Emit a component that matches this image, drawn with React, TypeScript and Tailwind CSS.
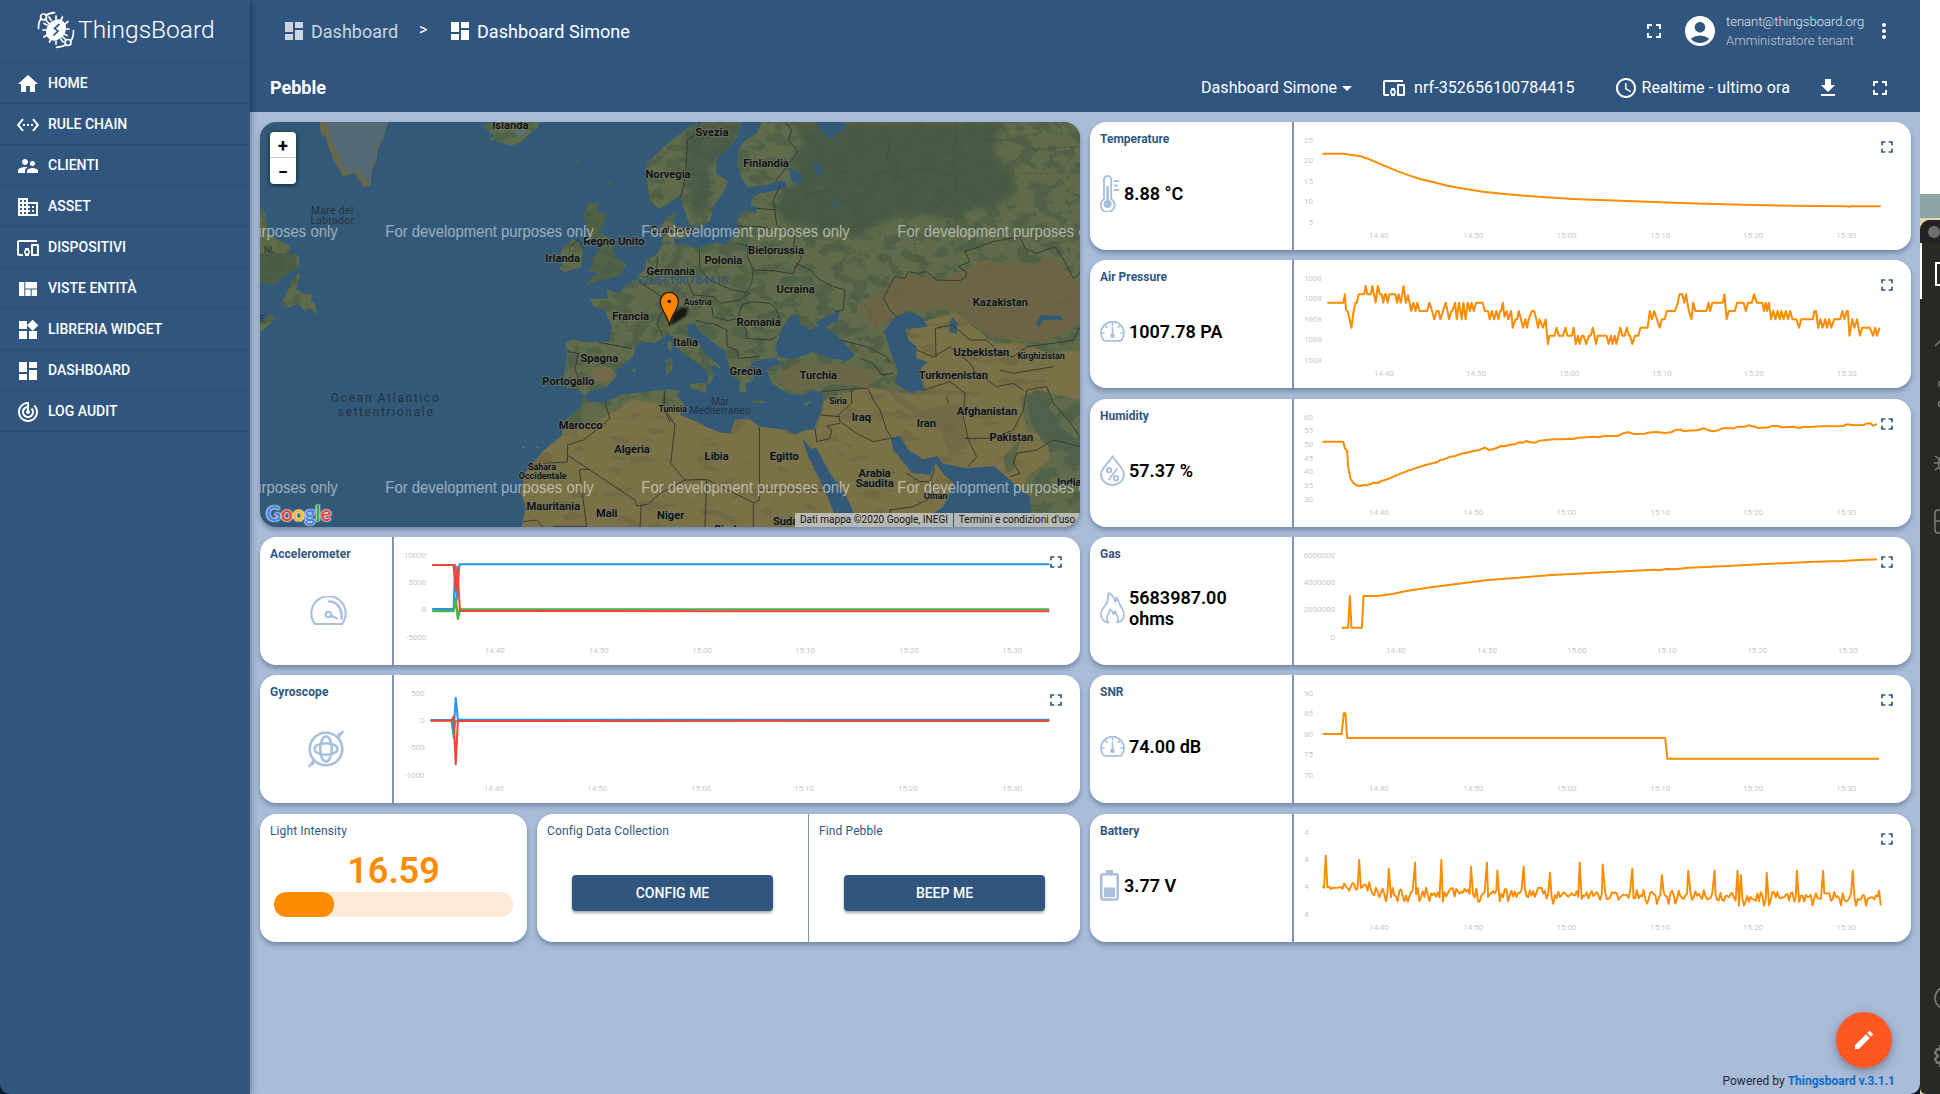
import React from "react";
import {
  MdHome, MdSettingsEthernet, MdSupervisorAccount, MdDomain, MdDevicesOther, MdViewQuilt, MdWidgets,
  MdDashboard, MdTrackChanges, MdFullscreen, MdAccountCircle, MdMoreVert, MdAccessTime, MdFileDownload,
  MdEdit, MdArrowDropDown,
} from "react-icons/md";

type Pt = [number, number];

const ORANGE = "#ff8b00";

/* ---------- chart ---------- */

interface Series { color: string; pts: Pt[]; width?: number }
interface ChartProps {
  side: "left" | "right";
  top: number;
  yLabels: [string, number][];
  yRight: number;
  xs: number[];
  series: Series[];
}

const TIMES = ["14:40", "14:50", "15:00", "15:10", "15:20", "15:30"];

function Chart({ side, top, yLabels, yRight, xs, series }: ChartProps) {
  const k = side === "right" ? 1.8233 : 1.8667;
  const x0 = side === "right" ? 390.2 : 268.8;
  const fx = (x: number) => +((x - x0) / k).toFixed(2);
  const fy = (y: number) => +((y - top) / 3).toFixed(2);
  return (
    <div className="relative h-full flex-1 bg-white">
      <svg className="block h-full w-full" fontFamily="Roboto, sans-serif" fontSize="8" fill="#c9c9c9">
        {yLabels.map(([t, y], i) => (
          <text key={i} x={fx(yRight)} y={fy(y) + 2.5} textAnchor="end">{t}</text>
        ))}
        {xs.map((x, i) => (
          <text key={i} x={fx(x)} y={115.500} textAnchor="middle">{TIMES[i]}</text>
        ))}
        {series.map((s, i) => (
          <polyline key={i} fill="none" stroke={s.color} strokeWidth={s.width ?? 2} strokeLinejoin="round"
            points={s.pts.map(([x, y]) => `${fx(x)},${fy(y)}`).join(" ")} />
        ))}
      </svg>
      <MdFullscreen className={side === "right" ? "absolute top-[15px] right-[14px] bg-white text-[#305680]" : "absolute top-[15px] right-[14px] text-[#305680]"} size={20} />
    </div>
  );
}

/* ---------- data ---------- */

const XS_A = [545, 717, 887, 1058, 1227, 1397];

const temperature: Pt[] = [[442, 131], [482, 131], [492, 134], [510, 138], [528, 148], [545, 160], [562, 172], [580, 184], [600, 196], [620, 207], [645, 217], [670, 227], [695, 235], [735, 245], [770, 251], [800, 256], [850, 262], [900, 267], [960, 271], [1058, 277], [1140, 281], [1227, 285], [1300, 287], [1398, 289], [1402, 290], [1406, 289], [1460, 289]];

const pressure: Pt[] = [[451, 578], [480, 578], [483, 553], [485, 600], [488, 603], [495, 653], [499, 603], [502, 578], [505, 578], [508, 553], [518, 553], [521, 528], [524, 553], [530, 553], [533, 528], [539, 578], [543, 528], [547, 553], [550, 553], [553, 578], [556, 553], [558, 553], [561, 578], [564, 553], [575, 553], [578, 578], [581, 553], [585, 578], [590, 528], [594, 578], [598, 556], [604, 603], [608, 578], [612, 603], [615, 578], [619, 603], [633, 603], [637, 578], [642, 603], [646, 628], [650, 603], [654, 603], [657, 628], [662, 603], [667, 578], [673, 628], [677, 603], [679, 603], [684, 578], [687, 628], [691, 578], [696, 628], [699, 578], [703, 628], [707, 578], [711, 603], [714, 578], [718, 603], [722, 578], [734, 578], [738, 603], [744, 603], [747, 628], [751, 603], [755, 628], [759, 603], [763, 628], [766, 603], [768, 603], [771, 578], [774, 620], [778, 603], [781, 628], [786, 603], [789, 653], [794, 628], [797, 628], [800, 603], [804, 628], [808, 653], [812, 628], [815, 653], [818, 628], [824, 603], [828, 603], [832, 628], [835, 653], [838, 628], [844, 653], [849, 628], [853, 702], [856, 677], [865, 677], [869, 653], [873, 677], [881, 677], [885, 653], [889, 677], [897, 677], [900, 653], [904, 702], [908, 677], [911, 702], [915, 677], [918, 677], [923, 702], [928, 677], [931, 677], [935, 653], [941, 702], [944, 677], [960, 677], [964, 702], [968, 677], [971, 702], [975, 677], [978, 702], [985, 653], [989, 677], [993, 677], [997, 653], [1001, 677], [1003, 677], [1007, 702], [1012, 677], [1018, 677], [1022, 653], [1035, 653], [1039, 603], [1043, 628], [1047, 603], [1052, 628], [1057, 653], [1061, 628], [1066, 628], [1070, 603], [1085, 603], [1090, 578], [1093, 553], [1098, 553], [1102, 578], [1105, 553], [1110, 603], [1115, 628], [1118, 578], [1122, 603], [1142, 603], [1146, 578], [1149, 603], [1153, 578], [1172, 578], [1175, 553], [1179, 628], [1183, 603], [1194, 603], [1198, 578], [1210, 578], [1214, 603], [1218, 578], [1225, 578], [1229, 553], [1234, 578], [1244, 578], [1247, 603], [1250, 578], [1253, 603], [1256, 578], [1260, 628], [1264, 603], [1268, 628], [1272, 603], [1276, 628], [1279, 603], [1283, 628], [1287, 603], [1291, 628], [1295, 603], [1299, 628], [1306, 628], [1311, 653], [1315, 628], [1336, 628], [1339, 603], [1342, 603], [1346, 653], [1350, 628], [1354, 653], [1359, 628], [1362, 653], [1366, 628], [1370, 653], [1375, 628], [1386, 628], [1390, 603], [1394, 628], [1398, 603], [1400, 603], [1403, 677], [1408, 628], [1412, 653], [1417, 628], [1422, 677], [1426, 653], [1440, 653], [1446, 677], [1450, 653], [1453, 677], [1458, 653]];

const humidity: Pt[] = [[442, 155], [480, 155], [483, 175], [487, 182], [489, 230], [493, 265], [498, 278], [504, 286], [511, 288], [517, 285], [522, 286], [527, 283], [530, 283], [535, 278], [542, 279], [550, 273], [560, 268], [580, 254], [600, 241], [630, 225], [652, 216], [656, 211], [664, 208], [675, 200], [683, 199], [695, 191], [705, 188], [715, 184], [728, 180], [738, 173], [746, 180], [755, 177], [768, 168], [774, 169], [785, 164], [795, 162], [800, 157], [808, 158], [814, 153], [821, 157], [830, 158], [838, 152], [850, 150], [865, 148], [880, 148], [893, 146], [898, 147], [910, 143], [935, 140], [945, 142], [957, 138], [980, 138], [990, 130], [1000, 127], [1010, 132], [1030, 131], [1035, 128], [1050, 126], [1067, 129], [1078, 127], [1087, 119], [1095, 119], [1100, 123], [1125, 121], [1138, 115], [1146, 121], [1155, 124], [1163, 121], [1172, 115], [1192, 115], [1200, 110], [1212, 110], [1219, 106], [1230, 110], [1237, 114], [1255, 112], [1262, 108], [1272, 108], [1280, 112], [1300, 110], [1312, 114], [1320, 110], [1330, 111], [1350, 109], [1392, 108], [1398, 103], [1412, 106], [1428, 105], [1434, 101], [1441, 100], [1446, 107], [1452, 103], [1458, 103]];

const gas: Pt[] = [[477, 713], [489, 713], [492, 618], [495, 713], [514, 713], [517, 618], [543, 618], [572, 611], [595, 603], [640, 592], [690, 581], [740, 571], [800, 563], [860, 555], [930, 549], [975, 545], [1048, 539], [1054, 541], [1070, 537], [1085, 538], [1110, 533], [1180, 528], [1250, 522], [1340, 515], [1390, 513], [1420, 510], [1460, 508]];

const snr: Pt[] = [[442, 222], [477, 222], [481, 160], [484, 160], [487, 234], [1067, 234], [1071, 296], [1457, 296]];

const SPIKES: Pt[] = [[448, 587], [509, 600], [563, 626], [611, 607], [659, 600], [713, 620], [742, 607], [761, 632], [809, 620], [857, 638], [911, 607], [953, 613], [1007, 626], [1061, 645], [1109, 632], [1157, 632], [1199, 632], [1205, 645], [1252, 638], [1307, 632], [1355, 632], [1409, 632], [1457, 692]];

function buildBattery(): Pt[] {
  const out: Pt[] = [];
  let seed = 11;
  const rnd = () => (seed = (seed * 16807) % 2147483647) / 2147483647;
  let si = 0;
  for (let x = 442; x <= 1460; x += 3.05) {
    const base = x < 480 ? 684 : x < 530 ? 682 : x < 850 ? 699 : x < 1150 ? 706 : 712;
    const amp = x < 480 ? 10 : 32;
    if (si < SPIKES.length && x >= SPIKES[si][0] - 1.6) {
      out.push([SPIKES[si][0], SPIKES[si][1]]);
      si++;
      continue;
    }
    const r = rnd();
    out.push([x, base + (r - 0.5) * amp + (r > 0.93 ? 10 : 0)]);
  }
  out.push([1460, 736]);
  return out;
}
const battery = buildBattery();

/* ---------- map ---------- */

const east = (p: Pt[]): Pt[] => p.map(([x, y]) => [x + 1230, y]);
const path = (p: Pt[], close = true) => "M" + p.map(([x, y]) => `${x},${y}`).join("L") + (close ? "Z" : "");

const EURAFRICA: Pt[] = [
  [2490, 36],
  ...east([[305, 36], [290, 70], [250, 95], [235, 120], [232, 165], [245, 205], [262, 232], [320, 225], [355, 212], [378, 216], [380, 232], [345, 242], [300, 250], [278, 262], [272, 285], [290, 290], [288, 310], [258, 300], [232, 325], [234, 372], [215, 385], [200, 405], [170, 398], [110, 415], [70, 402], [45, 405], [40, 380], [52, 360], [38, 335], [50, 305], [20, 325], [5, 345], [8, 400]]),
  [1222, 432], [1190, 450], [1182, 482], [1150, 508], [1125, 530], [1105, 550], [1070, 540], [1075, 565], [1020, 567], [1030, 590], [1065, 600], [1085, 650], [1078, 695], [1000, 695], [968, 688], [946, 700], [952, 735], [942, 800], [950, 835], [980, 835], [1005, 856], [1020, 842], [1070, 832], [1100, 800], [1098, 780], [1150, 740], [1157, 708], [1175, 695], [1215, 698], [1245, 680],
  ...east([[18, 670], [40, 680], [50, 712], [85, 742], [110, 755], [135, 780], [147, 800], [140, 818], [150, 822], [162, 795], [150, 775], [165, 765], [185, 780], [180, 768], [135, 730], [118, 700], [85, 680], [82, 645], [105, 640], [118, 665], [150, 690], [195, 725], [205, 760], [215, 795], [240, 815], [238, 845], [262, 848], [255, 822], [285, 810], [265, 780], [275, 758], [315, 745], [345, 748], [375, 758], [340, 768], [320, 780], [335, 820], [370, 842], [385, 852], [430, 855], [450, 842], [485, 845], [490, 865], [480, 910], [460, 958], [430, 962], [405, 975], [375, 960], [300, 950], [265, 925], [225, 930], [212, 970], [185, 968], [140, 952], [110, 935], [60, 915], [70, 880], [50, 855], [60, 842], [35, 838]]),
  [1210, 842], [1150, 850], [1110, 855], [1070, 876], [1020, 876], [1005, 860], [985, 898], [935, 940], [938, 975], [880, 1022], [850, 1058], [825, 1090], [812, 1150], [828, 1195], [815, 1251], [2490, 1251],
];

const SCANDINAVIA: Pt[] = [[1360, 36], [1320, 50], [1262, 92], [1248, 105], [1190, 160], [1192, 220], [1200, 275], [1228, 297], [1262, 275], [1290, 258], [1300, 290], [1318, 345], [1350, 352], [1382, 330], [1390, 290], [1420, 248], [1435, 215], [1398, 190], [1400, 145], [1440, 110], [1462, 80], [1475, 36]];

const SEAS: Pt[][] = [
  east([[385, 622], [412, 616], [422, 642], [450, 658], [478, 648], [465, 636], [540, 600], [532, 632], [498, 650], [545, 690], [585, 735], [560, 752], [510, 745], [460, 725], [400, 748], [355, 740], [347, 710], [365, 660]]),
  east([[705, 622], [745, 606], [785, 620], [802, 650], [760, 655], [735, 655], [745, 690], [770, 710], [768, 745], [802, 755], [778, 780], [792, 840], [750, 848], [705, 820], [715, 780], [690, 720], [672, 665]]),
  east([[426, 985], [455, 1018], [468, 1012], [510, 1090], [560, 1160], [600, 1251], [540, 1251], [510, 1180], [480, 1110], [445, 1040]]),
  east([[692, 985], [720, 978], [745, 1020], [790, 1048], [832, 1038], [848, 1060], [920, 1075], [1002, 1068], [1050, 1110], [1110, 1160], [1115, 1251], [760, 1251], [850, 1190], [882, 1120], [850, 1092], [828, 1058], [810, 1095], [755, 1088], [735, 1062], [700, 1020]]),
  east([[465, 36], [555, 36], [556, 60], [520, 70], [525, 92], [490, 72]]),
  east([[385, 170], [415, 185], [430, 205], [420, 222], [395, 215]]),
  east([[460, 150], [478, 165], [492, 200], [478, 205], [465, 180]]),
  east([[518, 268], [538, 285], [525, 292]]),
  east([[1130, 635], [1145, 615], [1200, 618], [1210, 630], [1150, 630], [1135, 655]]),
  east([[878, 620], [892, 640], [890, 672], [868, 665], [870, 640]]),
  east([[332, 742], [352, 744], [340, 750]]),
];

const ISLANDS: Pt[][] = [
  [[970, 388], [940, 410], [930, 432], [945, 448], [928, 478], [945, 487], [992, 472], [997, 440], [998, 418], [985, 395]],
  [[1015, 280], [1047, 278], [1038, 302], [1068, 312], [1058, 350], [1045, 365], [1078, 385], [1088, 415], [1102, 450], [1130, 462], [1112, 495], [1075, 505], [1040, 512], [1005, 527], [1030, 498], [1052, 490], [1014, 482], [1032, 462], [1026, 445], [1050, 420], [1042, 395], [1018, 385], [1010, 350], [1002, 318]],
  [[30, 295], [42, 300], [52, 345], [48, 368], [90, 392], [122, 408], [115, 430], [146, 436], [148, 472], [110, 492], [75, 522], [30, 518]],
  [[150, 487], [128, 506], [112, 548], [92, 580], [112, 592], [148, 582], [165, 605], [178, 592], [200, 614], [196, 582], [182, 572], [186, 552], [160, 550], [138, 538]],
  [[62, 612], [76, 628], [30, 668], [30, 640]],
  [[695, 48], [722, 36], [868, 36], [862, 52], [836, 74], [815, 96], [785, 107], [745, 96], [715, 88], [735, 78]],
  east([[25, 690], [36, 700], [34, 726], [22, 712]]),
  east([[15, 752], [36, 745], [38, 780], [22, 798]]),
  east([[88, 822], [140, 818], [138, 850], [92, 835]]),
  east([[272, 870], [316, 874], [312, 880], [275, 878]]),
  east([[425, 882], [455, 872], [440, 888]]),
  east([[38, 350], [75, 355], [78, 385], [45, 385]]),
  [[1145, 778], [1155, 775], [1158, 784], [1150, 788]],
  [[978, 152], [990, 150], [984, 158]], [[1076, 216], [1083, 218], [1078, 230]],
  [[815, 1012], [824, 1008], [820, 1018]], [[858, 1008], [868, 1012], [862, 1016]],
];

const DESERT: Pt[] = [[780, 1000], [940, 960], [1050, 930], [1150, 868], [1210, 880], [1290, 900], [1500, 930], [1700, 960], [1725, 870], [1850, 830], [1960, 850], [2030, 855], [2010, 760], [1960, 690], [2000, 640], [2120, 610], [2230, 700], [2310, 700], [2400, 730], [2490, 720], [2490, 870], [2360, 840], [2310, 860], [2330, 960], [2390, 980], [2400, 1050], [2330, 1100], [2300, 1251], [780, 1251]];
const STEPPE: Pt[] = [[1905, 540], [1960, 490], [2060, 510], [2150, 480], [2200, 450], [2330, 470], [2400, 440], [2490, 520], [2490, 640], [2380, 700], [2220, 680], [2110, 600], [2010, 600], [1960, 605], [1900, 640], [1860, 660], [1830, 590]];
const ANATOLIA: Pt[] = [[1590, 790], [1640, 760], [1790, 765], [1880, 780], [1900, 800], [1850, 830], [1720, 820], [1650, 850], [1600, 830]];
const FOREST: Pt[] = [[1300, 80], [1340, 36], [1475, 36], [1440, 110], [1370, 180], [1380, 300], [1330, 330], [1310, 200]];
const TAIGA: Pt[] = [[1630, 36], [2260, 36], [2230, 120], [2280, 200], [2290, 260], [2200, 300], [2150, 290], [2110, 330], [2000, 310], [1920, 330], [1830, 370], [1720, 360], [1600, 340], [1580, 260], [1650, 210], [1620, 150], [1660, 100]];

const BORDERS: Pt[][] = [
  east([[118, 36], [110, 70], [82, 90], [78, 180], [70, 230], [60, 265]]),
  east([[375, 36], [395, 60], [385, 90], [412, 125], [385, 165], [345, 215]]),
  east([[360, 225], [340, 270], [345, 300], [350, 345], [380, 365], [405, 380], [400, 420], [425, 440], [410, 470]]),
  east([[290, 295], [345, 300]]), east([[232, 348], [300, 350], [345, 360]]),
  east([[232, 400], [265, 408], [262, 440], [280, 480], [275, 520], [250, 560]]),
  east([[118, 420], [120, 480], [150, 510], [215, 540], [265, 548]]),
  east([[280, 480], [340, 482], [400, 492], [410, 460], [450, 480], [480, 510], [520, 530], [555, 540], [550, 600], [525, 605]]),
  east([[85, 520], [100, 555], [160, 560], [180, 580], [240, 570], [270, 548]]),
  east([[155, 590], [160, 620], [205, 632], [235, 625], [245, 585], [275, 575], [330, 580], [350, 600], [360, 635]]),
  east([[238, 630], [260, 660], [258, 685], [330, 690], [350, 680]]),
  east([[105, 630], [140, 640], [160, 640], [200, 660], [202, 710], [230, 720], [235, 745], [300, 740]]),
  east([[540, 690], [620, 710], [680, 740], [690, 760]]), east([[600, 745], [640, 760], [665, 795], [700, 790]]),
  east([[485, 845], [560, 838], [625, 835], [640, 870], [660, 900], [680, 960], [700, 990]]),
  east([[575, 840], [575, 880], [535, 915], [540, 935], [590, 970], [640, 995], [690, 985]]),
  east([[480, 915], [540, 920]]), east([[465, 955], [470, 995], [510, 985], [515, 960], [500, 948], [540, 940]]),
  east([[298, 950], [298, 1170], [280, 1180], [280, 1251]]),
  east([[298, 1140], [430, 1140], [500, 1140]]),
  east([[15, 842], [10, 890], [45, 945], [32, 1060], [75, 1110], [140, 1108], [280, 1178]]),
  east([[140, 1108], [135, 1251]]), east([[75, 1110], [0, 1150]]), [[1230, 1150], [1195, 1182], [1160, 1188], [1155, 1170], [952, 1035]],
  [[1174, 1186], [1170, 1251]], [[1065, 878], [1080, 925], [1040, 960], [1000, 990], [952, 1005], [952, 1056], [880, 1060]],
  [[988, 1078], [1010, 1251]], [[988, 1078], [1020, 1078]], [[820, 1235], [860, 1230], [880, 1251]], [[910, 1249], [1008, 1249]],
  [[952, 725], [985, 730], [975, 780], [985, 800], [970, 830]], [[1045, 697], [1090, 705], [1148, 716]],
  [[1243, 845], [1243, 900], [1260, 935]], [[960, 410], [985, 388], [1000, 415]],
  [[1150, 500], [1190, 530], [1235, 560], [1240, 600], [1220, 640], [1240, 680]], [[1222, 440], [1220, 490], [1190, 500]],
  east([[670, 565], [690, 525], [705, 500], [735, 505], [745, 485], [770, 490], [800, 485], [830, 510], [900, 512], [918, 500], [920, 488], [895, 470], [930, 455], [915, 425], [1000, 395], [1080, 380], [1095, 415], [1130, 430], [1185, 410], [1215, 455], [1240, 505], [1260, 490]]),
  east([[670, 565], [690, 600], [710, 620]]),
  east([[828, 742], [826, 655], [878, 645], [930, 690], [980, 690], [1020, 730], [1060, 740], [1100, 710], [1180, 700], [1240, 690], [1260, 650]]),
  east([[770, 720], [820, 742], [870, 710], [930, 760], [945, 785], [1010, 830], [1060, 820], [1090, 840]]),
  east([[790, 840], [870, 815], [915, 850], [910, 920], [925, 990], [950, 1040], [925, 1070]]),
  east([[915, 985], [1000, 985], [1060, 960], [1090, 900], [1100, 840], [1160, 830], [1180, 880], [1225, 930], [1260, 980]]),
  east([[1260, 1010], [1180, 990], [1130, 1020], [1070, 1030], [1060, 1060], [1080, 1090], [1050, 1100]]),
  east([[740, 1090], [780, 1115], [810, 1115], [825, 1075]]), east([[815, 1115], [820, 1160], [760, 1190], [690, 1200], [680, 1251]]),
  east([[1020, 780], [1060, 790], [1120, 780], [1180, 770]]), east([[860, 860], [865, 880]]),
];

const PROVINCES: Pt[][] = [
  east([[650, 36], [690, 90], [680, 150], [720, 170], [700, 230]]), east([[520, 180], [610, 200], [700, 180], [790, 175], [880, 200]]),
  east([[890, 40], [880, 150], [890, 240], [830, 290], [790, 270]]), east([[440, 250], [510, 240], [580, 290], [620, 330], [590, 370]]),
  east([[420, 380], [520, 390], [560, 430], [640, 420], [680, 470]]), east([[980, 90], [1060, 90], [1120, 120], [1250, 110]]),
  east([[760, 380], [770, 440], [820, 480]]), east([[580, 560], [620, 590], [650, 650]]), east([[1060, 190], [1180, 190], [1250, 260]]),
];

const LABELS: [string, number, number, number?][] = [
  ["Islanda", 781, 56], ["Norvegia", 1254, 203], ["Svezia", 1386, 77], ["Finlandia", 1548, 170], ["Danimarca", 1270, 368, 27],
  ["Regno Unito", 1092, 404], ["Irlanda", 938, 455], ["Bielorussia", 1578, 431], ["Polonia", 1420, 461], ["Germania", 1262, 496],
  ["Ucraina", 1637, 548], ["Austria", 1343, 585, 26], ["Francia", 1142, 629], ["Romania", 1526, 647], ["Italia", 1307, 707],
  ["Kazakistan", 2251, 587], ["Uzbekistan", 2194, 737], ["Kirghizistan", 2373, 747, 26.5], ["Turchia", 1705, 806], ["Turkmenistan", 2110, 806],
  ["Spagna", 1048, 755], ["Portogallo", 955, 824], ["Grecia", 1487, 794], ["Siria", 1764, 882, 26], ["Tunisia", 1268, 906, 26],
  ["Iraq", 1834, 932], ["Iran", 2029, 950], ["Afghanistan", 2211, 914], ["Pakistan", 2284, 992], ["Marocco", 992, 956],
  ["Algeria", 1146, 1028], ["Libia", 1400, 1049], ["Egitto", 1603, 1049], ["Arabia", 1874, 1100], ["Saudita", 1874, 1130],
  ["Sahara", 876, 1080, 27], ["Occidentale", 878, 1107, 27], ["Mauritania", 910, 1199], ["Mali", 1070, 1220], ["Niger", 1262, 1226],
  ["Oman", 2057, 1167, 27], ["Sudan", 1616, 1246], ["Ciad", 1425, 1268], ["India", 2458, 1127], ["Yemen", 1916, 1252],
];

function MapView() {
  return (
    <svg className="block h-full w-full" viewBox="30 36 2460 1215" preserveAspectRatio="none" fontFamily="Roboto, sans-serif">
      <defs>
        <clipPath id="land">
          <path d={path(EURAFRICA)} /><path d={path(SCANDINAVIA)} />
          {ISLANDS.map((p, i) => <path key={i} d={path(p)} />)}
        </clipPath>
        <filter id="mottle" x="0" y="0" width="100%" height="100%" colorInterpolationFilters="sRGB">
          <feTurbulence type="fractalNoise" baseFrequency="0.02 0.028" numOctaves="5" seed="7" />
          <feColorMatrix values="0 0 0 0 0.27  0 0 0 0 0.35  0 0 0 0 0.27  14 0 0 0 -7.1" />
        </filter>
        <filter id="dunes" x="0" y="0" width="100%" height="100%" colorInterpolationFilters="sRGB">
          <feTurbulence type="fractalNoise" baseFrequency="0.012 0.03" numOctaves="4" seed="23" />
          <feColorMatrix values="0 0 0 0 0.41  0 0 0 0 0.38  0 0 0 0 0.26  12 0 0 0 -7.6" />
        </filter>
        <clipPath id="desertClip"><path d={path(DESERT)} /><path d={path(STEPPE)} /><path d={path(ANATOLIA)} /></clipPath>
        <filter id="soft"><feGaussianBlur stdDeviation="9" /></filter>
        <filter id="shade"><feGaussianBlur stdDeviation="3" /></filter>
      </defs>
      <rect x="30" y="36" width="2460" height="1215" fill="#325a78" />
      <g clipPath="url(#land)">
        <rect x="30" y="36" width="2460" height="1215" fill="#5f6b4a" />
        <path d={path(TAIGA)} fill="#485a45" filter="url(#soft)" />
        <path d={path(FOREST)} fill="#4b5c46" filter="url(#soft)" />
        <rect x="1000" y="270" width="120" height="260" fill="#4f6044" opacity=".8" />
        <rect x="30" y="430" width="110" height="90" fill="#465b42" opacity=".8" />
        <rect x="30" y="36" width="2460" height="1215" filter="url(#mottle)" opacity=".5" />
        <path d={path(STEPPE)} fill="#6c6545" />
        <path d={path(ANATOLIA)} fill="#6a6847" />
        <path d={path(DESERT)} fill="#7a7147" />
        <ellipse cx="1058" cy="792" rx="34" ry="24" fill="#74694a" />
        <g clipPath="url(#desertClip)"><rect x="30" y="36" width="2460" height="1215" filter="url(#dunes)" opacity=".5" /></g>
        <path d={path(east([[900, 880], [920, 1010], [870, 1040], [840, 960], [700, 870], [680, 830], [780, 900]]))} fill="#6c6546" opacity=".6" />
        <path d={path(east([[1100, 850], [1160, 880], [1200, 950], [1260, 1000], [1260, 1040], [1150, 1000], [1110, 930]]))} fill="#4b5f4d" opacity=".8" />
        <path d={path(east([[1030, 1040], [1080, 990], [1060, 1080], [1040, 1090]]))} fill="#5a6649" />
      </g>
      <path d="M210,36L212,75L228,80L235,110L250,150L280,200L315,190L340,230L362,228L366,180L380,150L385,112L398,90L415,36Z" fill="#67664f" />
      <path d="M236,36L242,82L262,122L280,170L300,186L325,180L345,205L360,222L365,165L380,140L378,105L398,85L413,36Z" fill="#546b77" />
      <path d="M795,70L805,52L835,50L825,70L805,82Z" fill="#58707a" />
      {SEAS.map((p, i) => <path key={i} d={path(p)} fill="#325a78" />)}
      <g fill="none" stroke="#3a3c35" strokeWidth="3" strokeLinejoin="round">
        {BORDERS.map((p, i) => <path key={i} d={path(p, false)} />)}
        <g strokeDasharray="5 5" strokeWidth="2.4" opacity=".6">
          {PROVINCES.map((p, i) => <path key={i} d={path(p, false)} />)}
        </g>
      </g>
      <g textAnchor="middle" fill="#26313f" fontSize="31">
        <text x="247" y="313" letterSpacing="1">Mare del</text>
        <text x="247" y="343" letterSpacing="1">Labrador</text>
        <text x="407" y="876" fontSize="36" letterSpacing="5">Ocean Atlantico</text>
        <text x="408" y="918" fontSize="36" letterSpacing="5">settentrionale</text>
        <text x="1410" y="886">Mar</text>
        <text x="1410" y="913">Mediterraneo</text>
        <text x="58" y="429" fontSize="26">NL</text>
        <text x="38" y="636" fontSize="26">E</text>
      </g>
      <text x="1258" y="521" textAnchor="middle" fontSize="35" fill="#305680" fontWeight="500">nrf-352656100784415</text>
      <g textAnchor="middle" fill="#0c0e10" fontWeight="600" stroke="#757868" strokeOpacity=".6" strokeWidth="7" strokeLinejoin="round" paintOrder="stroke">
        {LABELS.map(([t, x, y, s], i) => <text key={i} x={x} y={y} fontSize={s ?? 33.5}>{t}</text>)}
      </g>
      <path d="M1258,648L1272,610L1292,592L1315,592L1308,618L1280,636Z" fill="#000" opacity=".75" filter="url(#shade)" />
      <path d="M1258,648C1256,618 1231,602 1231,574A27,27 0 0 1 1285,574C1285,602 1260,618 1258,648Z" fill="#ff8500" stroke="#1a1200" strokeWidth="3.5" />
      <circle cx="1258" cy="574" r="5" fill="#000" />
      <g fontFamily="'Liberation Sans', sans-serif" fontSize="48" fill="#fff" fillOpacity=".52">
        {[-362, 406, 1174, 1942].map((x) => (
          <React.Fragment key={x}>
            <text x={x} y="381" textLength="625" lengthAdjust="spacingAndGlyphs">For development purposes only</text>
            <text x={x} y="1149" textLength="625" lengthAdjust="spacingAndGlyphs">For development purposes only</text>
          </React.Fragment>
        ))}
      </g>
    </svg>
  );
}

/* ---------- widget icons ---------- */

const iconBase = { fill: "none", stroke: "#a9c0dc", strokeWidth: 1.9, strokeLinecap: "round" as const, strokeLinejoin: "round" as const };

const Thermometer = () => (
  <svg width="20" height="37" viewBox="0 0 20 37" {...iconBase} className="shrink-0">
    <path d="M4 24V4.5a3.6 3.6 0 0 1 7.2 0V24a7 7 0 1 1-7.2 0z" />
    <circle cx="7.6" cy="29" r="4" fill="#a9c0dc" stroke="none" /><path d="M7.6 28V12" strokeWidth="2.6" />
    <path d="M14.5 6h4M14.5 10.5h2.5M14.5 15h4" />
  </svg>
);
const Gauge = () => (
  <svg width="25" height="21" viewBox="0 0 25 21" {...iconBase} strokeWidth={1.7} className="shrink-0">
    <path d="M4 19.8a11.5 11.5 0 1 1 17 0z" />
    <path d="M12.5 6.5v9M12.5 2v2M5.5 5l1.2 1.2M19.5 5l-1.2 1.2M2 12h2M21 12h2" />
    <circle cx="12.5" cy="14.8" r="1.5" fill="#a9c0dc" />
  </svg>
);
const Drop = () => (
  <svg width="25" height="31" viewBox="0 0 25 31" {...iconBase} className="shrink-0">
    <path d="M12.5 1.2C9 8 1 13 1 19.3a11.3 10.6 0 0 0 23 0C24 13 16 8 12.5 1.2z" />
    <path d="M17 13.5l-8 11" /><circle cx="9" cy="15.2" r="2.2" /><circle cx="16" cy="23.2" r="2.2" />
  </svg>
);
const Flame = () => (
  <svg width="25" height="32" viewBox="0 0 25 32" {...iconBase} strokeWidth={1.8} className="shrink-0">
    <path d="M7 30.5C3 29 1 25.500 1 21.500c0-4.500 4-6.500 5.800-10.500C8.500 7 8 4 8.500 1c4 2 6.200 5 6.800 9 .8-1 1.200-2.500 1-4.500 2.500 2.500 2.500 5.500 4.200 8.500 1.500 3 3.500 4.500 3.500 8.500 0 4-2.500 7-6 8" />
    <path d="M8.500 30.500c-2-2-2-4.500-1-7 .8-2 2.200-3 2.500-6 2.500 1 3 2.500 3.500 4.500l1.500-3c.5 3.500 3.500 5 3.200 8.500 0 1.500-.5 2.500-1.200 3" />
  </svg>
);
const BatteryIcon = () => (
  <svg width="19" height="31" viewBox="0 0 19 31" className="shrink-0">
    <path d="M6 0h7v4H6z" fill="#a9c0dc" />
    <rect x="1.300" y="4.200" width="16.400" height="25.300" rx="2" fill="none" stroke="#a9c0dc" strokeWidth="2.600" />
    <rect x="4" y="17.500" width="11" height="9.500" fill="#a9c0dc" />
  </svg>
);
const Speedo = () => (
  <svg width="37" height="30" viewBox="0 0 37 30" {...iconBase} strokeWidth={2.1}>
    <path d="M5 28A17.200 17.200 0 1 1 32 28z" />
    <path d="M19 5.500c8 0 13.500 7 12.500 17" strokeWidth="2.600" />
    <circle cx="18.500" cy="18.500" r="2.800" /><path d="M21 19.500l6 3" />
  </svg>
);
const Gyro = () => (
  <svg width="38" height="38" viewBox="0 0 38 38" {...iconBase} strokeWidth={2.600}>
    <circle cx="19" cy="19" r="16.300" /><ellipse cx="19" cy="19" rx="11.500" ry="5.800" /><ellipse cx="19" cy="19" rx="5.800" ry="12.500" />
    <path d="M31.500 6.500l4-4.500M6.500 31.500l-4 4.500" /><path d="M32 4v3.500M6 34v-3.500" />
  </svg>
);

/* ---------- cards ---------- */

const shadow = "shadow-[0_3px_5px_rgba(50,70,110,0.45)]";

interface SensorProps { title: string; icon: React.ReactNode; value: string; gap: string; chart: React.ReactNode }
function SensorCard({ title, icon, value, gap, chart }: SensorProps) {
  return (
    <section className={`flex h-[128px] gap-[2px] overflow-hidden rounded-2xl bg-[#7f93b4] ${shadow}`}>
      <div className="flex w-[202px] flex-col bg-white px-[10px] pt-[10px]">
        <h2 className="text-[12px] leading-[14px] font-bold text-[#305680]">{title}</h2>
        <div className={`flex h-[94px] items-center ${gap}`}>
          {icon}
          <span className="w-[115px] text-[18px] leading-[21px] font-semibold text-black">{value}</span>
        </div>
      </div>
      {chart}
    </section>
  );
}

function MotionCard({ title, icon, chart }: { title: string; icon: React.ReactNode; chart: React.ReactNode }) {
  return (
    <section className={`flex h-[128px] gap-[2px] overflow-hidden rounded-2xl bg-[#7f93b4] ${shadow}`}>
      <div className="flex w-[132px] flex-col bg-white px-[10px] pt-[10px]">
        <h2 className="text-[12px] leading-[14px] font-bold tracking-[0.1px] text-[#305680]">{title}</h2>
        <div className="flex h-[99px] items-center justify-center">{icon}</div>
      </div>
      {chart}
    </section>
  );
}

function ActionPane({ title, label }: { title: string; label: string }) {
  return (
    <div className="flex flex-1 flex-col bg-white px-[10px] pt-[10px]">
      <h2 className="text-[12px] leading-[14px] tracking-[0.12px] text-[#305680]">{title}</h2>
      <button className="mt-[37px] h-9 w-[201px] self-center rounded bg-[#305680] text-[14px] font-medium text-white shadow-[0_2px_3px_rgba(0,0,0,0.35)]">{label}</button>
    </div>
  );
}

/* ---------- page ---------- */

const NAV: [string, React.ComponentType<{ size?: number }>][] = [
  ["HOME", MdHome], ["RULE CHAIN", MdSettingsEthernet], ["CLIENTI", MdSupervisorAccount], ["ASSET", MdDomain],
  ["DISPOSITIVI", MdDevicesOther], ["VISTE ENTITÀ", MdViewQuilt], ["LIBRERIA WIDGET", MdWidgets], ["DASHBOARD", MdDashboard], ["LOG AUDIT", MdTrackChanges],
];

const Logo = () => (
  <svg width="38" height="38" viewBox="0 0 38 38" fill="none" stroke="#fff" strokeWidth="1.7" strokeLinecap="round">
    <path d="M1.500 17.500C1.500 13 2.500 9 4.500 7.500M9 4.500C11.500 2.500 14 2 17.500 1.700" />
    <circle cx="6.500" cy="6" r="3" /><path d="M8.500 8.500l4 4.500" />
    <path d="M36.500 19.500c0 5-1 8.500-3 10.500M29 33.500C26.500 35.500 23.500 36 19.500 36.300" />
    <circle cx="31" cy="31.500" r="3" /><path d="M29 29l-4-4" />
    <ellipse cx="19" cy="19" rx="8.500" ry="10.500" transform="rotate(35 19 19)" fill="#fff" />
    <path d="M14 9l-2-3M19 8V5M24 9l1.500-3M28 13l3-2.500M29 18h3M27 23l3 1.500M10 14l-3-1.500M9 19H6M10 24l-3 2M14 28l-1.500 3M19 30v3M24 28l2 3" />
    <path d="M22 13.500l-4.500 4 3.500 2.500-4 4" stroke="#305680" strokeWidth="1.700" />
  </svg>
);

const GOOGLE: [string, string][] = [["G", "#4285f4"], ["o", "#ea4335"], ["o", "#fbbc05"], ["g", "#4285f4"], ["l", "#34a853"], ["e", "#ea4335"]];

export default function App() {
  return (
    <div className="flex h-[1094px] w-[1940px] overflow-hidden bg-[#0d1a2c] font-[Roboto,sans-serif]">
      <div className="flex w-[1920px] overflow-hidden rounded-b-[10px]">
        <aside className="z-10 flex w-[250px] flex-col bg-[#305680] text-white shadow-[2px_0_6px_rgba(0,0,0,0.28)]">
          <div className="flex h-[63px] items-start gap-[3px] border-b border-[#2a4c72] pt-[11px] pl-[37px]">
            <Logo />
            <span className="text-[24.5px] leading-[37px] font-light">ThingsBoard</span>
          </div>
          {NAV.map(([label, Icon]) => (
            <a key={label} className="flex h-[41px] items-center gap-2 border-b border-[#2a4c72] pt-px pl-4 text-[14px] font-medium">
              <Icon size={24} />{label}
            </a>
          ))}
        </aside>

        <div className="flex w-[1670px] flex-col bg-[#a9bcd8]">
          <header className="flex h-16 items-center bg-[#305680] pb-[3px] pl-8 text-[18px] text-white">
            <span className="flex w-[137px] items-center gap-[5px] text-white/75"><MdDashboard size={24} /><span className="pt-[2px]">Dashboard</span></span>
            <span className="w-[29px] pb-[2px] text-[16px]">&gt;</span>
            <span className="flex items-center gap-[5px]"><MdDashboard size={24} /><span className="pt-[2px] tracking-[0.05px]">Dashboard Simone</span></span>
            <div className="ml-auto flex items-center">
              <MdFullscreen size={24} />
              <MdAccountCircle size={36} className="ml-4" />
              <div className="ml-2 flex w-[146px] flex-col text-[13px] leading-[19px] font-light">
                <span className="text-white/85">tenant@thingsboard.org</span>
                <span className="text-white/70">Amministratore tenant</span>
              </div>
              <MdMoreVert size={24} className="mr-6" />
            </div>
          </header>

          <div className="flex h-12 items-center bg-[#305680] pl-5 text-[16px] text-white">
            <span className="pb-px text-[18px] font-bold">Pebble</span>
            <div className="ml-auto flex items-center">
              <span className="tracking-[0.05px]">Dashboard Simone</span>
              <MdArrowDropDown size={24} className="-ml-[2px] mr-[23px]" />
              <MdDevicesOther size={24} className="mr-2" />
              <span className="mr-[40px] tracking-[0.06px]">nrf-352656100784415</span>
              <MdAccessTime size={24} className="mr-[3px]" />
              <span className="mr-[26px] tracking-[0.08px]">Realtime - ultimo ora</span>
              <MdFileDownload size={24} className="mr-7" />
              <MdFullscreen size={24} className="mr-7" />
            </div>
          </div>

          <main className="flex gap-[10px] pt-[10px] pl-[10px]">
            <div className="flex w-[820px] flex-col gap-[10px]">
              <section className={`relative h-[405px] overflow-hidden rounded-2xl ${shadow}`}>
                <MapView />
                <div className="absolute top-[10px] left-[10px] w-[26px] overflow-hidden rounded bg-white text-center text-[18px] leading-[27px] font-bold text-black shadow-[0_1px_5px_rgba(0,0,0,0.65)]">
                  <div className="h-[26px] border-b border-[#ccc]">+</div>
                  <div className="h-[26px]">−</div>
                </div>
                <div className="absolute bottom-[1px] left-[6px] flex font-[Lato,sans-serif] text-[20.5px] leading-[26px] font-bold [text-shadow:0_0_2px_#fff,0_0_2px_#fff,0_0_1px_#fff]">
                  {GOOGLE.map(([c, color], i) => <span key={i} style={{ color }}>{c}</span>)}
                </div>
                <div className="absolute right-0 bottom-0 flex h-[14px] gap-px text-[10px] leading-[14px] text-[#111]">
                  <span className="w-[158px] bg-[#c3c3bb]/90 text-center tracking-[0.02px] whitespace-nowrap">Dati mappa ©2020 Google, INEGI</span>
                  <span className="w-[126px] bg-[#c3c3bb]/90 text-center tracking-[0.04px] whitespace-nowrap">Termini e condizioni d'uso</span>
                </div>
              </section>

              <MotionCard title="Accelerometer" icon={<span className="pl-[5px]"><Speedo /></span>} chart={
                <Chart side="left" top={21} yRight={329} yLabels={[["10000", 75], ["5000", 156], ["0", 238], ["-5000", 321]]}
                  xs={[457, 651, 844, 1036, 1230, 1423]} series={[
                    { color: "#2196f3", width: 2, pts: [[340, 237], [380, 237], [383, 105], [386, 210], [391, 103], [1492, 103]] },
                    { color: "#4caf50", width: 2.4, pts: [[340, 243], [380, 243], [384, 205], [388, 266], [392, 238], [1492, 238]] },
                    { color: "#f44336", width: 2, pts: [[340, 105], [380, 105], [384, 182], [387, 110], [392, 243], [1492, 244]] },
                  ]} />} />
              <MotionCard title="Gyroscope" icon={<Gyro />} chart={
                <Chart side="left" top={435} yRight={326} yLabels={[["500", 490], ["0", 571], ["-500", 652], ["-1000", 736]]}
                  xs={[455, 648, 842, 1034, 1228, 1423]} series={[
                    { color: "#4caf50", width: 1.5, pts: [[337, 572], [376, 572], [380, 625], [384, 572], [1492, 574]] },
                    { color: "#2196f3", width: 2, pts: [[337, 570], [376, 570], [380, 610], [384, 503], [388, 569], [1492, 569]] },
                    { color: "#f44336", width: 2, pts: [[337, 572], [376, 572], [380, 560], [384, 703], [388, 573], [1492, 572]] },
                  ]} />} />

              <div className="mt-px flex gap-[10px]">
                <section className={`flex h-[128px] w-[267px] flex-col rounded-2xl bg-white px-[10px] pt-[10px] ${shadow}`}>
                  <h2 className="text-[12px] leading-[14px] tracking-[0.12px] text-[#305680]">Light Intensity</h2>
                  <span className="mt-[12px] text-center text-[36px] leading-[42px] font-semibold text-[#ff8b00]">16.59</span>
                  <div className="ml-1 h-[25px] w-[239px] overflow-hidden rounded-xl bg-[#ffe8d8]">
                    <div className="h-full w-[60px] rounded-xl bg-[#ff8b00]" />
                  </div>
                </section>
                <section className={`flex h-[128px] w-[543px] gap-px overflow-hidden rounded-2xl bg-[#7f93b4] ${shadow}`}>
                  <ActionPane title="Config Data Collection" label="CONFIG ME" />
                  <ActionPane title="Find Pebble" label="BEEP ME" />
                </section>
              </div>
            </div>

            <div className="flex w-[821px] flex-col gap-[10px]">
              <SensorCard title="Temperature" icon={<Thermometer />} value="8.88 °C" gap="gap-[4px]" chart={
                <Chart side="right" top={36} yRight={425} yLabels={[["25", 90], ["20", 150], ["15", 213], ["10", 273], ["5", 336]]} xs={XS_A} series={[{ color: ORANGE, pts: temperature }]} />} />
              <SensorCard title="Air Pressure" icon={<Gauge />} value="1007.78 PA" gap="gap-[4px]" chart={
                <Chart side="right" top={450} yRight={441} yLabels={[["1008", 504], ["1008", 565], ["1008", 628], ["1008", 688], ["1008", 750]]}
                  xs={[554, 722, 892, 1061, 1229, 1398]} series={[{ color: ORANGE, pts: pressure }]} />} />
              <div className="mt-px">
                <SensorCard title="Humidity" icon={<Drop />} value="57.37 %" gap="gap-[4px]" chart={
                  <Chart side="right" top={27} yRight={425} yLabels={[["60", 81], ["55", 120], ["50", 162], ["45", 204], ["40", 243], ["35", 285], ["30", 327]]} xs={XS_A} series={[{ color: ORANGE, pts: humidity }]} />} />
              </div>
              <SensorCard title="Gas" icon={<Flame />} value="5683987.00 ohms" gap="gap-[4px]" chart={
                <Chart side="right" top={441} yRight={465} yLabels={[["6000000", 495], ["4000000", 576], ["2000000", 657], ["0", 741]]}
                  xs={[576, 742, 906, 1070, 1235, 1400]} series={[{ color: ORANGE, pts: gas }]} />} />
              <SensorCard title="SNR" icon={<Gauge />} value="74.00 dB" gap="gap-[4px]" chart={
                <Chart side="right" top={45} yRight={425} yLabels={[["90", 99], ["85", 160], ["80", 222], ["75", 282], ["70", 345]]} xs={XS_A} series={[{ color: ORANGE, pts: snr }]} />} />
              <div className="mt-px">
                <SensorCard title="Battery" icon={<BatteryIcon />} value="3.77 V" gap="gap-[5px]" chart={
                  <Chart side="right" top={462} yRight={417} yLabels={[["4", 516], ["4", 597], ["4", 680], ["4", 763]]} xs={XS_A} series={[{ color: ORANGE, pts: battery, width: 1.9 }]} />} />
              </div>
            </div>
          </main>

          <footer className="mt-auto flex flex-col items-end">
            <button className="mr-7 flex h-14 w-14 items-center justify-center rounded-full bg-[#ff5722] text-white shadow-[0_3px_10px_rgba(60,60,90,0.5)]"><MdEdit size={24} /></button>
            <p className="mt-[5px] mr-[25px] mb-[5px] text-[12px] leading-4 text-[#1f2a38]">Powered by <b className="font-bold text-[#106cc8]">Thingsboard v.3.1.1</b></p>
          </footer>
        </div>
      </div>

      <div className="flex w-5 flex-col bg-white">
        <div className="h-[194px]" />
        <div className="h-[24px] bg-[#8aa5a3]" />
        <div className="flex flex-1 flex-col bg-[#e3d6b0]">
          <div className="mt-[2px] flex flex-1 flex-col overflow-hidden rounded-tl-[10px] rounded-bl-[6px] bg-[#282923]">
            <div className="flex h-[23px] items-center bg-[#222222] pl-2"><div className="h-3 w-3 shrink-0 rounded-full bg-[#6f6f6f]" /></div>
            <div className="relative flex-1">
              <div className="h-[56px] w-[2px] bg-white" />
              <svg className="absolute top-0 left-0" width="20" height="851" fill="none" stroke="#7d7e79" strokeWidth="1.500">
                <path d="M22 20h-6v22h6" stroke="#fff" strokeWidth="2" />
                <path d="M15 103l6-6" /><circle cx="21" cy="141" r="2.500" /><circle cx="21" cy="161" r="2.500" />
                <path d="M15 213l4 3M14 220h6M15 227l4-3M22 213c-4 1-5 13 0 15" />
                <path d="M22 267h-4q-3 0-3 3v17q0 3 3 3h4M15 278h7" />
                <circle cx="26" cy="755" r="11" />
                <path d="M22 803h-2v4l-3-1-2 4 3 3-3 3 2 4 3-1v4h2" strokeWidth="2" />
              </svg>
            </div>
          </div>
        </div>
      </div>
    </div>
  );
}
